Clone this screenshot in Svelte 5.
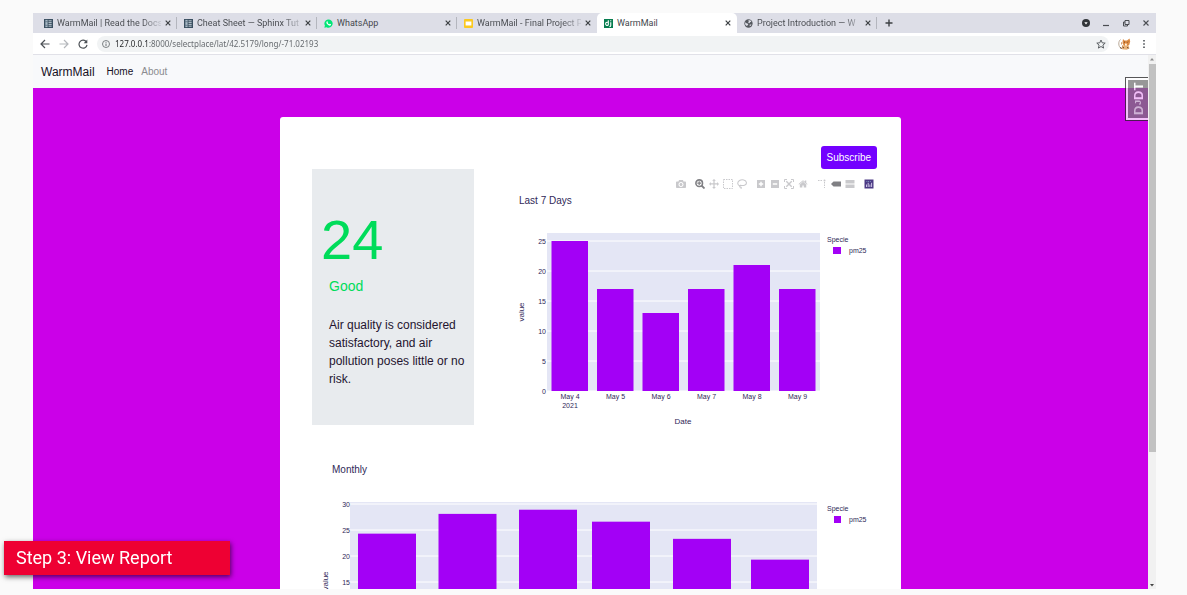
<script>
  const tabs = [
    { icon: 'docs', title: 'WarmMail | Read the Docs', faded: true },
    { icon: 'docs', title: 'Cheat Sheet — Sphinx Tut', faded: true },
    { icon: 'whatsapp', title: 'WhatsApp' },
    { icon: 'slides', title: 'WarmMail - Final Project P', faded: true },
    { icon: 'django', title: 'WarmMail', active: true },
    { icon: 'globe', title: 'Project Introduction — W', faded: true }
  ];

  const week = [
    { label: 'May 4', value: 25 },
    { label: 'May 5', value: 17 },
    { label: 'May 6', value: 13 },
    { label: 'May 7', value: 17 },
    { label: 'May 8', value: 21 },
    { label: 'May 9', value: 17 }
  ];
  const weekTicks = [0, 5, 10, 15, 20, 25];

  const months = [
    { x: 46, value: 24.3 },
    { x: 126.5, value: 28.1 },
    { x: 207, value: 28.9 },
    { x: 280, value: 26.6 },
    { x: 361, value: 23.3 },
    { x: 439, value: 19.3 }
  ];
  const monthTicks = [15, 20, 25, 30];

  const camera = 'm500 450c-83 0-150-67-150-150 0-83 67-150 150-150 83 0 150 67 150 150 0 83-67 150-150 150z m400 150h-120c-16 0-34 13-39 29l-31 93c-6 15-23 28-40 28h-340c-16 0-34-13-39-28l-31-94c-6-15-23-28-40-28h-120c-55 0-100-45-100-100v-450c0-55 45-100 100-100h800c55 0 100 45 100 100v450c0 55-45 100-100 100z m-400-550c-138 0-250 112-250 250 0 138 112 250 250 250 138 0 250-112 250-250 0-138-112-250-250-250z';
  const pan = 'm1000 350l-187 188 0-125-250 0 0 250 125 0-188 187-187-187 125 0 0-250-250 0 0 125-188-188 186-187 0 125 252 0 0-250-125 0 187-188 188 188-125 0 0 250 250 0 0-126 187 188z';
  const home = 'm786 296v-267q0-15-11-26t-25-10h-214v214h-143v-214h-214q-15 0-25 10t-11 26v267q0 1 0 2t0 2l321 264 321-264q1-1 1-4z m124 39l-34-41q-5-5-12-6h-2q-7 0-12 3l-386 322-386-322q-7-4-13-4-7 2-12 7l-35 41q-4 5-3 13t6 12l401 334q18 15 42 15t43-15l136-114v109q0 8 5 13t13 5h107q8 0 13-5t5-13v-227l122-102q5-5 6-12t-4-13z';

  const toolGroups = [
    ['camera'],
    ['zoom', 'pan', 'select', 'lasso'],
    ['plus', 'minus', 'autoscale', 'home'],
    ['spikes', 'closest', 'compare'],
    ['plotly']
  ];
  const toolNames = {
    camera: 'Download plot as a png', zoom: 'Zoom', pan: 'Pan', select: 'Box Select', lasso: 'Lasso Select',
    plus: 'Zoom in', minus: 'Zoom out', autoscale: 'Autoscale', home: 'Reset axes',
    spikes: 'Toggle Spike Lines', closest: 'Show closest data on hover', compare: 'Compare data on hover',
    plotly: 'Produced with Plotly'
  };

  let url = $state('127.0.0.1:8000/selectplace/lat/42.5179/long/-71.02193');
</script>

{#snippet favicon(name)}
  <svg class="favicon" viewBox="0 0 10 10" aria-hidden="true">
    {#if name === 'docs'}
      <path d="M0 0h10v10H0z" fill="#3a4f60" />
      <path d="M1.5 1h2.5v8H1.5z" fill="#a9bac7" />
      <path d="M5 2h3.5M5 4h3.5M5 6h3.5M5 8h3.5" stroke="#c9d5de" stroke-width="1" />
      <path d="M1.5 3h2.5M1.5 7h2.5" stroke="#3a4f60" stroke-width=".6" />
    {:else if name === 'whatsapp'}
      <path d="M.4 9.7l.6-2.4A4.6 4.6 0 1 1 2.800 9.100z" fill="#00e676" />
      <path d="M3.200 2.700c.5-.5.8-.2 1 .5.2.6-.2.8-.1 1.100.4.9.9 1.300 1.600 1.600.4.1.5-.7 1-.5l1 .5c.4.3-.1 1.300-.9 1.500C4.900 7.700 2.200 5 2.700 3.400z" fill="#fff" />
    {:else if name === 'slides'}
      <rect width="10" height="10" rx="1" fill="#fbc91f" />
      <path d="M1.800 2.800h6.400v4.400H1.800z" fill="#fff" />
    {:else if name === 'django'}
      <path d="M0 0h10v10H0z" fill="#087d50" />
      <path d="M4.800 1.500v5.500M4.800 3.800C2.600 3.300 1.800 4 1.800 5.500S3 7.300 4.800 7M7.500 3.500v3.600c0 1-.5 1.300-1.500 1.600M7.500 1.500v1" fill="none" stroke="#fff" stroke-width="1.200" />
    {:else}
      <circle cx="5" cy="5" r="4.600" fill="#54585e" />
      <path d="M1.300 3.500l2 1.500 1.500.4-.4 1.400-1.300 1L1.300 6zM5 1.200l2.300.4.9 1.400-1.500.6-.6 1.200-1.500-.5L5.200 3zM6.200 6.300l2-.6-.5 1.500-1.300.9z" fill="#dddee7" />
    {/if}
  </svg>
{/snippet}

{#snippet tool(name)}
  <svg viewBox="0 0 10 10" aria-hidden="true">
    {#if name === 'camera' || name === 'pan' || name === 'home'}
      <path
        transform="matrix(.01 0 0 -.01 {name === 'home' ? 0.4 : 0} 8.5)"
        d={name === 'camera' ? camera : name === 'pan' ? pan : home}
        fill="currentColor"
      />
    {:else if name === 'zoom'}
      <circle cx="4.200" cy="4.200" r="3.300" fill="none" stroke="currentColor" stroke-width="1.600" />
      <path d="M6.500 6.500L9.500 9.500" stroke="currentColor" stroke-width="1.800" />
      <path d="M4.200 2.300v3.800M2.300 4.200h3.800" stroke="currentColor" stroke-width="1.200" />
    {:else if name === 'select'}
      <path d="M.5 .5h9v9h-9z" fill="none" stroke="currentColor" stroke-dasharray="1.500 1" />
    {:else if name === 'lasso'}
      <path d="M3 7C.2 6 0 3 2.500 1.500S9 .8 9.400 3.500 6 7 3.500 6.300c-1.500.6-.8 2 .2 1.800 1 .2.600 1.300 0 1.600" fill="none" stroke="currentColor" stroke-width="1.100" />
    {:else if name === 'plus'}
      <path fill-rule="evenodd" d="M1 1h8v8H1zM4.300 2.800v1.500H2.800v1.400h1.500v1.500h1.400V5.700h1.500V4.300H5.700V2.800z" fill="currentColor" />
    {:else if name === 'minus'}
      <path fill-rule="evenodd" d="M1 1h8v8H1zM2.800 4.300v1.400h4.400V4.300z" fill="currentColor" />
    {:else if name === 'autoscale'}
      <path d="M.5 3V.5H3M7 .5h2.500V3M9.500 7v2.500H7M3 9.500H.5V7" fill="none" stroke="currentColor" />
      <path d="M2.300 2.300l5.400 5.400M7.700 2.300L2.300 7.700" stroke="currentColor" stroke-width="1.400" />
    {:else if name === 'spikes'}
      <path d="M1 1.500h5M7.500 3v6" stroke="currentColor" stroke-dasharray="1.500 1" fill="none" />
      <circle cx="7.500" cy="1.500" r="1" fill="currentColor" />
    {:else if name === 'closest'}
      <path d="M0 5l2.500-2.500H10v5H2.500z" fill="currentColor" />
    {:else if name === 'compare'}
      <path d="M.5 1h9v3.500h-9zM.5 5.500h9V9h-9z" fill="currentColor" />
    {:else}
      <path d="M.5 .5h9v9h-9z" fill="#4c3a85" />
      <path d="M2.500 8V5.500M4.200 8V3.800M5.900 8V5.500M7.600 8V3.800" stroke="#d9d3ee" stroke-width=".9" />
      <path d="M2.500 2.500h.8M4.200 2.500h.8M5.900 2.500h.8" stroke="#8fb7d6" stroke-width=".8" />
    {/if}
  </svg>
{/snippet}

<div class="browser">
  <div class="tabbar">
    <div class="tabs">
      {#each tabs as t}
        <div class="tab" class:active={t.active}>
          {@render favicon(t.icon)}
          <span class="title" class:faded={t.faded}>{t.title}</span>
          <button class="plain" aria-label="Close tab">
            <svg class="x" viewBox="0 0 6 6"><path d="M.7 .7l4.600 4.600M5.300 .7L.7 5.300" /></svg>
          </button>
        </div>
      {/each}
      <button class="plain new" aria-label="New tab">
        <svg class="px8" viewBox="0 0 8 8"><path d="M4 .5v7M.5 4h7" stroke="#3c4043" stroke-width="1.400" /></svg>
      </button>
    </div>
    <div class="window">
      <button class="plain" aria-label="Tab search">
        <svg class="px8" viewBox="0 0 8 8"><circle cx="4" cy="4" r="4" fill="#33363a" /><path d="M2.300 3.200h3.400L4 5.400z" fill="#fff" /></svg>
      </button>
      <button class="plain" aria-label="Minimize">
        <svg class="px8" viewBox="0 0 8 8"><path d="M1 6.500h6" stroke="#4a4d52" stroke-width="1.200" /></svg>
      </button>
      <button class="plain" aria-label="Restore">
        <svg class="px8" viewBox="0 0 8 8"><path d="M3 1.500h4v4H3zM3 3H1.500v4h4V5.500" fill="none" stroke="#4a4d52" /></svg>
      </button>
      <button class="plain" aria-label="Close">
        <svg class="px8" viewBox="0 0 8 8"><path d="M1.500 1.500l5 5M6.500 1.500l-5 5" stroke="#4a4d52" stroke-width="1.100" /></svg>
      </button>
    </div>
  </div>

  <div class="toolbar">
    <button class="plain nav-icon" aria-label="Back">
      <svg viewBox="0 0 10 10"><path d="M9.500 5H1.200M5 1L1 5l4 4" stroke="#4d5156" /></svg>
    </button>
    <button class="plain nav-icon" aria-label="Forward">
      <svg viewBox="0 0 10 10"><path d="M.5 5h8.300M5 1l4 4-4 4" stroke="#b4b7bb" /></svg>
    </button>
    <button class="plain nav-icon" aria-label="Reload">
      <svg viewBox="0 0 10 10"><path d="M8.400 3A4 4 0 1 0 9 5.800" stroke="#4d5156" /><path d="M9.300 .6v3.600H5.700z" fill="#4d5156" /></svg>
    </button>
    <div class="address">
      <svg class="px8" viewBox="0 0 8 8" aria-hidden="true"><circle cx="4" cy="4" r="3.500" fill="none" stroke="#5f6368" stroke-width=".8" /><path d="M4 3.500v2.500M4 1.900v.9" stroke="#5f6368" stroke-width=".9" /></svg>
      <input aria-label="Address" bind:value={url} spellcheck="false" />
      <button class="plain" aria-label="Bookmark this page">
        <svg class="star" viewBox="0 0 10 10"><path d="M5 1l1.200 2.800 3 .3-2.300 2 .7 3L5 7.500l-2.600 1.600.7-3-2.300-2 3-.3z" fill="none" stroke="#4d5156" stroke-width=".9" /></svg>
      </button>
    </div>
    <button class="plain" aria-label="Profile">
      <svg class="avatar" viewBox="0 0 13 12">
        <path d="M2.500 1.500C0 3.500.3 8.500 3 10.500" fill="none" stroke="#a8937c" stroke-width=".8" />
        <path d="M5 1l1.500 1.500h2.500L11.500.5l.7 3-1 3.500-2.500 1.500L5.500 7.500 4.500 4z" fill="#dc8a42" />
        <path d="M4 7l3 1 3.500-.5 1 3-3 1.200-4.500-.5z" fill="#e7b27a" />
        <path d="M7 5.500l2 .3L8.500 8l-1.500-.5z" fill="#fff3df" />
        <path d="M6 3.700l1 .8M10 3.700l-.7.8M4.500 9l1.500 1M9 9.500l1.500.500M2 9.500l2 1" stroke="#63351b" stroke-width=".9" />
        <path d="M3 4l1.500 1L3.500 7z" fill="#c37a3e" />
      </svg>
    </button>
    <button class="plain" aria-label="Menu">
      <svg class="px8" viewBox="0 0 8 8"><path d="M3.200 0h1.600v1.600H3.200zM3.200 3.200h1.600v1.600H3.200zM3.200 6.400h1.600V8H3.200z" fill="#4d5156" /></svg>
    </button>
  </div>

  <div class="viewport">
    <div class="page">
      <nav>
        <a class="brand" href="#home">WarmMail</a>
        <a class="current" href="#home">Home</a>
        <a href="#about">About</a>
      </nav>

      <main>
        <section class="card">
          <div class="actions"><button class="subscribe">Subscribe</button></div>

          <div class="today">
            <div class="reading">
              <h1>24</h1>
              <h2>Good</h2>
              <p>Air quality is considered satisfactory, and air pollution poses little or no risk.</p>
            </div>

            <div class="chart">
              <div class="modebar">
                {#each toolGroups as group}
                  <div class="group">
                    {#each group as name}
                      <button
                        class="plain tool"
                        class:on={name === 'zoom' || name === 'closest'}
                        aria-label={toolNames[name]}>{@render tool(name)}</button
                      >
                    {/each}
                  </div>
                {/each}
              </div>
              <svg class="plot" viewBox="0 0 387 269" role="img" aria-label="Last 7 Days">
                <text class="heading" x="29" y="35">Last 7 Days</text>
                <rect class="area" x="57" y="64" width="273" height="158" />
                {#each weekTicks as v}
                  <path class="grid" d="M57 {222 - v * 6}H330" />
                  <text x="56" y={225 - v * 6} text-anchor="end">{v}</text>
                {/each}
                {#each week as d, i}
                  <rect class="bar" x={61.5 + i * 45.5} y={222 - d.value * 6} width="36.5" height={d.value * 6} />
                  <text x={80 + i * 45.5} y="230" text-anchor="middle">{d.label}</text>
                {/each}
                <text x="80" y="239" text-anchor="middle">2021</text>
                <text class="axis" x="193" y="255" text-anchor="middle">Date</text>
                <text class="axis" transform="translate(34 143) rotate(-90)" text-anchor="middle">value</text>
                <text x="337" y="73">Specie</text>
                <rect class="bar" x="343" y="78" width="8" height="7" />
                <text x="359" y="84">pm25</text>
              </svg>
            </div>
          </div>

          <svg class="plot" viewBox="0 0 565 269" role="img" aria-label="Monthly">
            <text class="heading" x="20" y="35">Monthly</text>
            <rect class="area" x="38" y="64" width="467" height="158" />
            {#each monthTicks as v}
              <path class="grid" d="M38 {222 - v * 5.2}H505" />
              <text x="38" y={225 - v * 5.2} text-anchor="end">{v}</text>
            {/each}
            {#each months as m}
              <rect class="bar" x={m.x} y={222 - m.value * 5.2} width="58" height={m.value * 5.2} />
            {/each}
            <text class="axis" transform="translate(16 143) rotate(-90)" text-anchor="middle">value</text>
            <text x="515" y="73">Specie</text>
            <rect class="bar" x="522" y="78" width="7" height="7" />
            <text x="537" y="84">pm25</text>
          </svg>
        </section>
      </main>

      <button class="djdt" aria-label="Show debug toolbar"><span><b>D</b><small>J</small>DT</span></button>
    </div>

    <div class="scrollbar" aria-hidden="true">
      <svg viewBox="0 0 8 8"><path d="M2 5.500h4L4 3z" fill="#8b8b8b" /></svg>
      <div class="track"><div class="thumb"></div></div>
      <svg viewBox="0 0 8 8"><path d="M2 3h4L4 5.500z" fill="#444" /></svg>
    </div>
  </div>
</div>

<div class="step">Step 3: View Report</div>

<style>
  :global(body) {
    background: #fafafa;
    font-family: 'Liberation Sans', Arial, sans-serif;
    overflow: hidden;
  }
  .browser {
    display: flex;
    flex-direction: column;
    height: calc(100vh - 19px);
    margin: 13px 31px 6px 33px;
    background: #fff;
    overflow: hidden;
  }
  svg {
    display: block;
    flex: none;
  }
  .plain {
    display: flex;
    align-items: center;
    justify-content: center;
    flex: none;
    padding: 0;
    border: 0;
    background: none;
    color: inherit;
  }
  .px8 {
    width: 8px;
    height: 8px;
  }

  .tabbar {
    display: flex;
    justify-content: space-between;
    flex: none;
    height: 20px;
    padding: 0 5px 0 4px;
    background: #dddee7;
  }
  .tabs,
  .window {
    display: flex;
    align-items: center;
  }
  .tab {
    display: flex;
    align-items: center;
    gap: 4px;
    box-sizing: border-box;
    width: 140px;
    height: 20px;
    padding: 0 6px 0 7px;
    font: 9px/20px Roboto, sans-serif;
    color: #45484d;
    background: linear-gradient(#b4b6be, #b4b6be) right center / 1px 12px no-repeat;
  }
  .tab.active {
    border-radius: 5px 5px 0 0;
    background: #fff;
  }
  .tab:has(+ .active) {
    background: none;
  }
  .favicon {
    width: 9px;
    height: 9px;
  }
  .title {
    flex: 1;
    min-width: 0;
    white-space: nowrap;
  }
  .faded {
    background: linear-gradient(to right, #45484d 82%, #c4c6cf);
    background-clip: text;
    -webkit-text-fill-color: transparent;
  }
  .x {
    width: 6px;
    height: 6px;
    fill: none;
    stroke: #3c4043;
    stroke-width: 1.2;
  }
  .new {
    width: 24px;
  }
  .window {
    gap: 12px;
    padding-right: 1px;
  }

  .toolbar {
    display: flex;
    align-items: center;
    gap: 9px;
    flex: none;
    height: 21px;
    padding: 0 8px 0 7px;
    border-bottom: 1px solid #e1e1e8;
  }
  .nav-icon svg {
    width: 10px;
    height: 10px;
    fill: none;
    stroke-width: 1.2;
  }
  .address {
    display: flex;
    align-items: center;
    flex: 1;
    gap: 5px;
    height: 16px;
    padding: 0 3px 0 5px;
    border-radius: 8px;
    background: #f1f3f4;
  }
  .address input {
    flex: 1;
    min-width: 0;
    padding: 0;
    border: 0;
    outline: 0;
    font: 8px/16px 'Noto Sans', sans-serif;
    background: linear-gradient(to right, #202124 35px, #5f6368 35px);
    background-clip: text;
    -webkit-text-fill-color: transparent;
  }
  .star {
    width: 10px;
    height: 10px;
  }
  .avatar {
    width: 13px;
    height: 12px;
  }

  .viewport {
    display: flex;
    flex: 1;
    min-height: 0;
  }
  .page {
    position: relative;
    flex: 1;
    min-width: 0;
    overflow: hidden;
    background: #cb00e8;
  }
  nav {
    display: flex;
    align-items: center;
    gap: 8px;
    height: 33px;
    padding: 0 8px;
    background: #f8f9fb;
  }
  nav a {
    font-size: 10px;
    color: #8b8c90;
    text-decoration: none;
  }
  nav .current {
    color: #16101f;
  }
  nav .brand {
    margin-right: 4px;
    font-size: 12px;
    color: #16101f;
  }
  .card {
    box-sizing: border-box;
    max-width: 621px;
    margin: 29px auto;
    padding: 29px 24px 0 32px;
    border-radius: 3px;
    background: #fff;
  }
  .actions {
    display: flex;
    justify-content: flex-end;
  }
  .subscribe {
    height: 23px;
    padding: 0 6px;
    border: 0;
    border-radius: 3px;
    font: 10px 'Liberation Sans', Arial, sans-serif;
    color: #fff;
    background: #7300ff;
  }
  .today {
    display: flex;
    gap: 16px;
  }
  .reading {
    box-sizing: border-box;
    flex: none;
    width: 162px;
    height: 256px;
    padding: 39px 8px 0 9px;
    background: #e8ebee;
    color: #24142e;
  }
  .reading h1 {
    margin: 0;
    font-size: 56px;
    font-weight: 400;
    line-height: 64px;
    color: #00dc5a;
  }
  .reading h2 {
    margin: 4px 0 0 8px;
    font-size: 14px;
    font-weight: 400;
    line-height: 20px;
    color: #00dc5a;
  }
  .reading p {
    margin: 20px 0 0 8px;
    font-size: 12px;
    line-height: 18px;
  }
  .chart {
    position: relative;
    flex: 1;
    min-width: 0;
  }
  .modebar {
    position: absolute;
    top: 8px;
    right: 1px;
    display: flex;
    gap: 5px;
  }
  .group {
    display: flex;
  }
  .tool {
    width: 14px;
    height: 14px;
    color: #c9c9cc;
  }
  .tool.on {
    color: #808084;
  }
  .tool svg {
    width: 10px;
    height: 10px;
  }
  .plot {
    width: 100%;
    height: auto;
  }
  .plot text {
    font-size: 7px;
    fill: #2f2858;
  }
  .plot .heading {
    font-size: 10px;
  }
  .plot .axis {
    font-size: 8px;
  }
  .area {
    fill: #e4e6f5;
  }
  .grid {
    stroke: #fff;
    stroke-width: 1;
  }
  .bar {
    fill: #a300f6;
  }

  .djdt {
    position: absolute;
    top: 22px;
    right: 0;
    width: 23px;
    height: 44px;
    padding: 2px 0 2px 2px;
    border: 1px solid #222;
    border-right: 0;
    background: #fff;
    opacity: 0.75;
  }
  .djdt span {
    display: flex;
    align-items: center;
    justify-content: center;
    width: 100%;
    height: 100%;
    font: 700 13px 'Liberation Sans', Arial, sans-serif;
    writing-mode: vertical-rl;
    rotate: 180deg;
    color: #fff;
    background: #777;
  }
  .djdt b,
  .djdt small {
    color: #cfeccf;
  }
  .djdt small {
    font-size: 9px;
  }

  .scrollbar {
    display: flex;
    flex-direction: column;
    flex: none;
    width: 8px;
    background: #f1f1f1;
  }
  .track {
    flex: 1;
    padding-top: 1px;
  }
  .thumb {
    width: 7px;
    height: 75%;
    margin-left: 1px;
    background: #c1c1c1;
  }

  .step {
    position: fixed;
    left: 4px;
    bottom: 20px;
    box-sizing: border-box;
    width: 226px;
    padding: 0 12px;
    font: 18px/34px Roboto, sans-serif;
    color: #fff;
    background: #ee0033;
    box-shadow: 1px 2px 5px rgba(0, 0, 0, 0.6);
  }
</style>
